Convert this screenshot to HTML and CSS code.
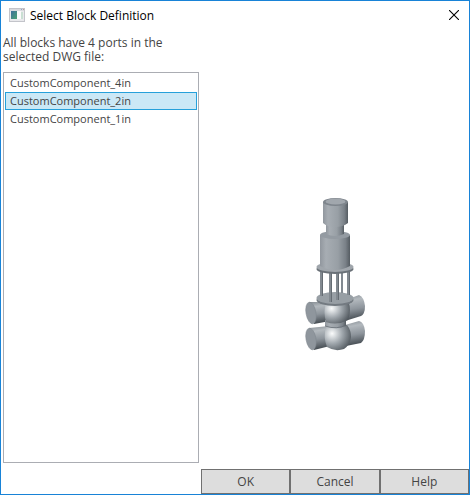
FILE: index.html
```html
<!DOCTYPE html>
<html lang="en">
<head>
    <meta charset="UTF-8">
    <meta name="viewport" content="width=device-width, initial-scale=1.0">
    <title>Select Block Definition</title>
    <link rel="stylesheet" href="styles.css">
</head>
<body>
    <form class="dialog">
        <header class="title-bar">
            <svg class="app-icon" width="16" height="14" viewBox="0 0 16 14" aria-hidden="true">
                <defs>
                    <linearGradient id="screen" x1="0" y1="0" x2="1" y2="1">
                        <stop offset="0" stop-color="#3f6f9c"/>
                        <stop offset="1" stop-color="#4ba373"/>
                    </linearGradient>
                </defs>
                <rect x="0.5" y="0.5" width="15" height="13" fill="#e9e9ec" stroke="#c3c4ca"/>
                <rect x="1" y="1" width="14" height="2" fill="#d9dade"/>
                <rect x="2" y="3" width="6" height="8" fill="url(#screen)"/>
                <rect x="8" y="3" width="4" height="8" fill="#fafafa"/>
                <rect x="12" y="4" width="2" height="7" fill="#c9dfd3"/>
                <rect x="12" y="1" width="1" height="1" fill="#8fa6c8"/>
                <rect x="14" y="1" width="1" height="1" fill="#bd9a9a"/>
            </svg>
            <h1>Select Block Definition</h1>
            <button type="button" class="close-btn" aria-label="Close">
                <svg width="10" height="10" viewBox="0 0 10 10"><path d="M0 0L10 10M10 0L0 10" stroke="#000" stroke-width="1.1"/></svg>
            </button>
        </header>
        <label class="info" for="blockList">All blocks have 4 ports in the selected DWG file:</label>
        <div class="content">
            <select class="block-list" id="blockList" size="3">
                <option>CustomComponent_4in</option>
                <option selected>CustomComponent_2in</option>
                <option>CustomComponent_1in</option>
            </select>
            <div class="preview">
                <svg width="62" height="162" viewBox="304 190 62 162" role="img" aria-label="Block preview">
                    <defs>
                        <linearGradient id="metal" x1="0" y1="0" x2="1" y2="0">
                            <stop offset="0" stop-color="#91979e"/>
                            <stop offset="0.2" stop-color="#a7adb3"/>
                            <stop offset="0.6" stop-color="#989fa5"/>
                            <stop offset="0.85" stop-color="#7a8188"/>
                            <stop offset="1" stop-color="#555c62"/>
                        </linearGradient>
                        <linearGradient id="pipe" x1="0" y1="0" x2="0.15" y2="1">
                            <stop offset="0" stop-color="#868d93"/>
                            <stop offset="0.25" stop-color="#b3b9be"/>
                            <stop offset="0.6" stop-color="#8e959c"/>
                            <stop offset="1" stop-color="#474e54"/>
                        </linearGradient>
                        <radialGradient id="ball" cx="0.28" cy="0.36" r="0.8">
                            <stop offset="0" stop-color="#fbfcfc"/>
                            <stop offset="0.2" stop-color="#d6dadd"/>
                            <stop offset="0.5" stop-color="#9ea5ab"/>
                            <stop offset="1" stop-color="#4c5359"/>
                        </radialGradient>
                    </defs>
                    <!-- lower pipes and body -->
                    <path d="M345 325L359 321Q364 322 365 331Q365 340 361 343L346 346Z" fill="url(#pipe)"/>
                    <path d="M309 328L329 326L330 346L314 350Z" fill="url(#pipe)"/>
                    <ellipse cx="311" cy="339" rx="5" ry="11" transform="rotate(-10 311 339)" fill="#8f969d" stroke="#7e858c" stroke-width="0.5"/>
                    <path d="M326 326Q337 323 347 325Q351 330 351 337Q350 345 344 349Q335 352 327 347Q323 337 326 326Z" fill="url(#ball)"/>
                    <!-- upper pipes and body -->
                    <path d="M343 301L359 295Q364 297 365 306Q365 314 361 316L345 321Z" fill="url(#pipe)"/>
                    <path d="M309 302L329 302L330 321L314 324Z" fill="url(#pipe)"/>
                    <ellipse cx="311" cy="313" rx="5" ry="11" transform="rotate(-10 311 313)" fill="#8f969d" stroke="#7e858c" stroke-width="0.5"/>
                    <path d="M325 320L346 320L346 326Q337 330 325 326Z" fill="url(#metal)"/>
                    <path d="M325 326Q337 330 346 325" fill="none" stroke="#656c73" stroke-width="0.8"/>
                    <path d="M326 303Q338 298 348 301Q352 310 348 320Q337 326 326 322Q323 312 326 303Z" fill="url(#ball)"/>
                    <!-- lower flange -->
                    <ellipse cx="335" cy="300" rx="18.500" ry="6" fill="#737a81"/>
                    <ellipse cx="335" cy="298" rx="18.500" ry="6" fill="#989fa5"/>
                    <!-- rods -->
                    <g fill="#828990">
                        <rect x="320" y="269" width="3" height="27"/>
                        <rect x="329" y="271" width="3" height="31"/>
                        <rect x="336" y="271" width="3" height="29"/>
                        <rect x="341" y="271" width="2" height="22"/>
                        <rect x="347" y="269" width="3" height="26"/>
                    </g>
                    <g fill="#656c73">
                        <rect x="322" y="271" width="1" height="25"/>
                        <rect x="331" y="272" width="1" height="30"/>
                        <rect x="338" y="272" width="1" height="28"/>
                        <rect x="349" y="271" width="1" height="24"/>
                    </g>
                    <!-- upper flange -->
                    <ellipse cx="335" cy="269" rx="18.500" ry="5" fill="#6a7178"/>
                    <ellipse cx="335" cy="267" rx="18.500" ry="5" fill="#a0a6ac"/>
                    <!-- motor -->
                    <path d="M320 235L350 235L350 266Q335 274 320 266Z" fill="url(#metal)"/>
                    <ellipse cx="335" cy="235" rx="15" ry="4" fill="#949ba2"/>
                    <path d="M326 222L344 222L344 234Q335 238 326 234Z" fill="url(#metal)"/>
                    <path d="M323 202L348 202L348 223Q343 227 335 227Q327 227 323 223Z" fill="url(#metal)"/>
                    <ellipse cx="335.500" cy="202" rx="12.500" ry="4" fill="#7e858c"/>
                    <ellipse cx="335.500" cy="201.500" rx="10" ry="3" fill="#a1a7ad"/>
                </svg>
            </div>
        </div>
        <div class="buttons">
            <button type="submit">OK</button>
            <button type="button">Cancel</button>
            <button type="button">Help</button>
        </div>
    </form>
</body>
</html>
```
FILE: styles.css
```css
* {
    box-sizing: border-box;
}
body {
    margin: 0;
    background: white;
    font-family: "Open Sans", "Noto Sans", sans-serif;
    font-size: 12px;
    color: #444;
}
.dialog {
    display: flex;
    flex-direction: column;
    min-height: 100vh;
    border: 1px solid #1883d7;
}
.title-bar {
    display: flex;
    align-items: center;
    height: 28px;
    padding: 0 10px 0 8px;
}
.title-bar h1 {
    flex: 1;
    margin: 0 0 0 5px;
    font-size: 12px;
    font-weight: normal;
    color: black;
}
.close-btn {
    display: flex;
    padding: 0;
    border: none;
    background: none;
}
.info {
    width: 170px;
    margin: 7px 0 8px 2px;
    line-height: 14px;
}
.content {
    display: grid;
    grid-template-columns: 196px 1fr;
    gap: 2px;
    flex: 1;
    padding-left: 2px;
}
.block-list {
    height: auto;
    margin: 0 0 6px;
    padding: 1px;
    border: 1px solid #abadb3;
    border-radius: 0;
    outline: none;
    background: white;
    font: inherit;
    font-size: 11px;
    color: #444;
    overflow: hidden;
}
.block-list option {
    height: 18px;
    min-height: 0;
    margin-bottom: 0;
    padding: 0 4px;
    border: 1px solid transparent;
    line-height: 16px;
    -webkit-text-fill-color: #444;
}
.block-list option:checked {
    border-color: #26a0da;
    background: linear-gradient(#cbe8f6, #cbe8f6);
}
.preview {
    display: flex;
    align-items: center;
    justify-content: center;
}
.buttons {
    display: grid;
    grid-template-columns: repeat(3, 1fr);
    margin-left: 200px;
}
.buttons button {
    height: 25px;
    padding: 0;
    border: 1px solid #707070;
    background: #ddd;
    font: inherit;
    color: #444;
}
```
